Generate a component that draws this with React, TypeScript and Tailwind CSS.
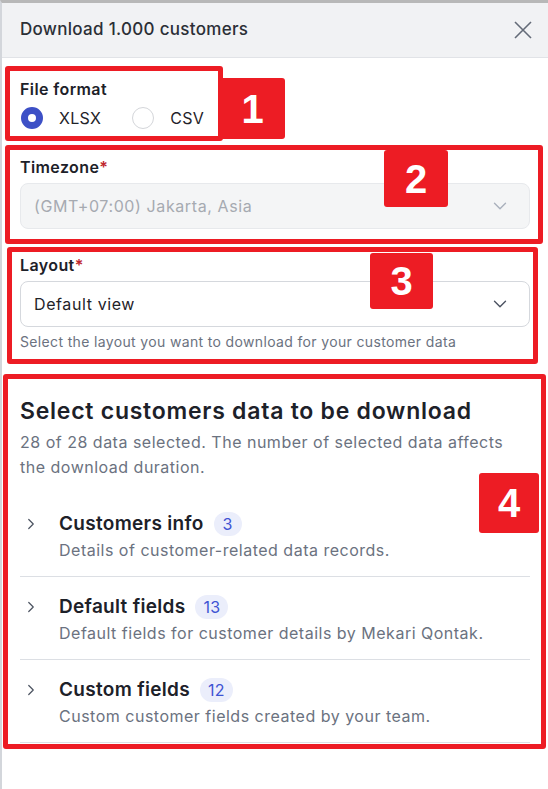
import { ChevronDown, ChevronRight } from "lucide-react";

const groups = [
  { title: "Customers info", count: 3, desc: "Details of customer-related data records." },
  { title: "Default fields", count: 13, desc: "Default fields for customer details by Mekari Qontak." },
  { title: "Custom fields", count: 12, desc: "Custom customer fields created by your team." },
];

function Radio({ label, checked }: { label: string; checked?: boolean }) {
  return (
    <label className="flex items-center gap-4 h-6">
      <span
        className={
          checked
            ? "size-[22px] rounded-full border-[7px] border-[#3d50c6] bg-white"
            : "size-[22px] rounded-full border border-[#d4d6da] bg-white"
        }
      />
      <span className="text-base tracking-[0.3px] text-[#1f2329]">{label}</span>
    </label>
  );
}

function Marker({ n, className }: { n: number; className: string }) {
  return (
    <div
      className={`absolute bg-[#ed1c24] rounded-[3px] flex items-center justify-center text-white text-[40px] font-bold font-['Liberation_Sans',Arial,sans-serif] ${className}`}
    >
      {n}
    </div>
  );
}

function Frame({ className }: { className: string }) {
  return <div className={`absolute border-[5px] border-[#ed1c24] rounded-[3px] pointer-events-none ${className}`} />;
}

export default function App() {
  return (
    <div className="relative min-h-screen w-[548px] bg-white border-t-[3px] border-t-[#b8b8b8] border-l-2 border-l-[#d3d6db] font-['Inter',sans-serif]">
      <div className="h-[55px] bg-[#f1f2f4] border-b border-[#e1e3e7] flex items-center justify-between pl-[18px] pr-[16px]">
        <h1 className="text-[17px] tracking-[0.3px] font-medium text-[#2b2f36]">Download 1.000 customers</h1>
        <svg width="18" height="18" viewBox="0 0 18 18" className="text-[#646b78]">
          <path d="M1 1 17 17M17 1 1 17" stroke="currentColor" strokeWidth="1.6" fill="none" />
        </svg>
      </div>

      <div className="px-[18px] pt-[19px]">
        <div className="flex flex-col gap-[5px]">
          <div className="text-base leading-6 tracking-[0.4px] font-semibold text-[#1d2129]">File format</div>
          <div className="flex items-center gap-[31px] pl-px">
            <Radio label="XLSX" checked />
            <Radio label="CSV" />
          </div>
        </div>

        <div className="mt-[25px] flex flex-col gap-1">
          <div className="text-base leading-6 tracking-[0.4px] font-semibold text-[#1d2129]">
            Timezone<span className="text-[#c0262d]">*</span>
          </div>
          <div className="h-[46px] rounded-lg bg-[#f4f5f6] border border-[#e7e9ec] flex items-center justify-between pl-[13px] pr-[18px]">
            <span className="text-base tracking-[0.6px] text-[#a6aab1]">(GMT+07:00) Jakarta, Asia</span>
            <ChevronDown size={22} strokeWidth={1.5} className="text-[#a9b0bc]" />
          </div>
        </div>

        <div className="mt-6 flex flex-col gap-1">
          <div className="text-base leading-6 tracking-[0.4px] font-semibold text-[#1d2129]">
            Layout<span className="text-[#c0262d]">*</span>
          </div>
          <div className="h-[46px] rounded-lg bg-white border border-[#d5d8dd] flex items-center justify-between pl-[13px] pr-[18px]">
            <span className="text-base tracking-[0.6px] text-[#1f2329]">Default view</span>
            <ChevronDown size={22} strokeWidth={1.5} className="text-[#4b5260]" />
          </div>
          <p className="text-sm leading-5 tracking-[0.35px] text-[#6b7280] pt-px">
            Select the layout you want to download for your customer data
          </p>
        </div>

        <div className="mt-[44px]">
          <h2 className="text-[23px] leading-[30px] tracking-[0.75px] font-semibold text-[#1d2129]">
            Select customers data to be download
          </h2>
          <p className="mt-1 text-base leading-[25px] tracking-[0.5px] text-[#6b7280]">
            28 of 28 data selected. The number of selected data affects the download duration.
          </p>

          <div className="mt-[14px]">
            {groups.map((g) => (
              <div key={g.title} className="flex gap-[19px] pt-4 pb-[14px] border-b border-[#dcdfe4]">
                <div className="h-7 flex items-center pl-[2px]">
                  <ChevronRight size={18} strokeWidth={1.6} className="text-[#4b5260]" />
                </div>
                <div>
                  <div className="flex items-center gap-[10px] h-7">
                    <span className="text-[19px] tracking-[0.3px] font-semibold text-[#1d2129]">{g.title}</span>
                    <span className="h-6 min-w-[28px] px-2 rounded-full bg-[#ebeefb] text-base tracking-[0.3px] text-[#3e54d3] flex items-center justify-center">
                      {g.count}
                    </span>
                  </div>
                  <div className="text-base leading-6 tracking-[0.5px] text-[#6b7280]">{g.desc}</div>
                </div>
              </div>
            ))}
          </div>
        </div>
      </div>

      <Frame className="left-[3px] top-[63px] w-[218px] h-[75px]" />
      <Marker n={1} className="left-[218px] top-[75px] w-[65px] h-[61px]" />
      <Frame className="left-[3px] top-[142px] w-[538px] h-[99px]" />
      <Marker n={2} className="left-[382px] top-[147px] w-[64px] h-[57px]" />
      <Frame className="left-[5px] top-[244px] w-[531px] h-[117px]" />
      <Marker n={3} className="left-[368px] top-[250px] w-[63px] h-[56px]" />
      <Frame className="left-[1px] top-[371px] w-[543px] h-[375px]" />
      <Marker n={4} className="left-[477px] top-[470px] w-[60px] h-[60px]" />
    </div>
  );
}
